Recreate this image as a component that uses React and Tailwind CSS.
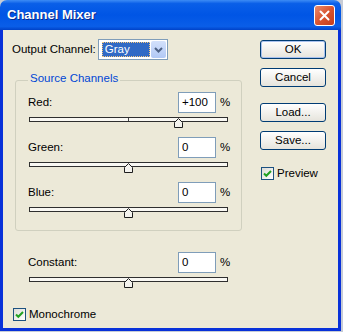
import React from "react";

function Thumb({ value }) {
  // value -200..200 mapped across the 199px track
  const left = 94 + (value / 200) * 99.5;
  return (
    <svg className="absolute top-0" style={{ left }} width="10" height="10" viewBox="0 0 10 10">
      <path d="M0.5 9.5 V4.5 L4.5 0.5 L8.5 4.5 V9.5 Z" fill="#f4f3ee" stroke="#1e1e1e" strokeWidth="1" />
    </svg>
  );
}

function Slider({ value, tick }) {
  return (
    <div className="relative ml-[1px] mt-[4px] h-[5px] w-[199px] border border-[#2f2f2f] bg-[#f9f8f3]">
      {tick && <div className="absolute left-[98px] top-0 h-full w-px bg-[#444]" />}
      <Thumb value={value} />
    </div>
  );
}

function MixRow({ label, value, text, tick }) {
  return (
    <div className="flex h-[45px] w-[200px] flex-col">
      <div className="flex h-[21px] items-center">
        <span className="flex-1">{label}</span>
        <div className="h-[21px] w-[38px] border border-[#7f9db9] bg-white px-[3px] leading-[19px]">{text}</div>
        <span className="ml-[4px] w-[8px]">%</span>
      </div>
      <Slider value={value} tick={tick} />
    </div>
  );
}

function XpButton({ children, def, className = "" }) {
  return (
    <div
      className={
        "h-[19px] w-[66px] rounded-[3px] border border-[#003c74] bg-gradient-to-b from-white to-[#e6e4dc] text-center leading-[17px] " +
        (def ? "shadow-[inset_0_0_0_1px_#a9c2ee] " : "") +
        className
      }
    >
      {children}
    </div>
  );
}

function Check({ label, className = "" }) {
  return (
    <div className={"flex items-center " + className}>
      <div className="flex h-[13px] w-[13px] items-center justify-center border border-[#1c5180] bg-gradient-to-br from-[#dcdcd6] to-white">
        <svg width="11" height="11" viewBox="0 0 11 11">
          <path d="M2 5.5 L4.3 7.8 L9 3" fill="none" stroke="#21a121" strokeWidth="2" />
        </svg>
      </div>
      <span className="ml-[3px]">{label}</span>
    </div>
  );
}

export default function App() {
  return (
    <div className="h-[332px] w-[343px] bg-[#c7ccd6] font-['Liberation_Sans',Arial,sans-serif] text-[11.5px] text-black">
      <div className="flex h-[331px] w-[341px] flex-col">
        {/* title bar */}
        <div className="flex h-[30px] items-center rounded-t-[7px] bg-[linear-gradient(to_bottom,#3d8cf5_0%,#0a5fe8_12%,#0055e5_50%,#0a5ee8_88%,#0042c8_100%)] pl-[7px] pr-[6px]">
          <span className="text-[13px] font-bold text-white [text-shadow:1px_1px_0_#0a2a8a]">Channel Mixer</span>
          <div className="ml-auto flex h-[21px] w-[21px] items-center justify-center rounded-[3px] border border-white bg-gradient-to-br from-[#e98a6c] via-[#d9542f] to-[#c33d1c]">
            <svg width="11" height="11" viewBox="0 0 11 11">
              <path d="M1.5 1.5 L9.5 9.5 M9.5 1.5 L1.5 9.5" stroke="white" strokeWidth="2" strokeLinecap="round" />
            </svg>
          </div>
        </div>

        {/* body */}
        <div className="flex flex-1 border-x-[3px] border-b-[3px] border-[#0831d9] bg-[#ece9d8]">
          <div className="w-[257px] pl-[9px] pt-[9px]">
            <div className="flex h-[21px] items-center">
              <span>Output Channel:</span>
              <div className="ml-[2px] flex h-[21px] w-[70px] items-center border border-[#7f9db9] bg-white pl-[3px] pr-[1px]">
                <div className="h-[15px] w-[48px] border border-dotted border-[#f5c77c] bg-[#316ac5] pl-[2px] leading-[13px] text-white">
                  Gray
                </div>
                <div className="ml-auto flex h-[17px] w-[15px] items-center justify-center rounded-[2px] bg-gradient-to-b from-[#d3e1fb] to-[#b1c8f5]">
                  <svg width="9" height="6" viewBox="0 0 9 6">
                    <path d="M1 1 L4.5 4.5 L8 1" fill="none" stroke="#4d6185" strokeWidth="2" />
                  </svg>
                </div>
              </div>
            </div>

            <div className="relative ml-[3px] mt-[20px] h-[151px] w-[227px] rounded-[3px] border border-[#d0d0bf] pl-[12px] pt-[11px]">
              <span className="absolute -top-[10px] left-[12px] bg-[#ece9d8] px-[2px] leading-[14px] text-[#0046d5]">
                Source Channels
              </span>
              <MixRow label="Red:" value={100} text="+100" tick />
              <MixRow label="Green:" value={0} text="0" />
              <MixRow label="Blue:" value={0} text="0" />
            </div>

            <div className="ml-[16px] mt-[21px]">
              <MixRow label="Constant:" value={0} text="0" />
            </div>

            <Check label="Monochrome" className="ml-[1px] mt-[9px]" />
          </div>

          <div className="pt-[10px]">
            <XpButton def>OK</XpButton>
            <XpButton className="mt-[9px]">Cancel</XpButton>
            <XpButton className="mt-[16px]">Load...</XpButton>
            <XpButton className="mt-[9px]">Save...</XpButton>
            <Check label="Preview" className="ml-[1px] mt-[15px]" />
          </div>
        </div>
      </div>
    </div>
  );
}
